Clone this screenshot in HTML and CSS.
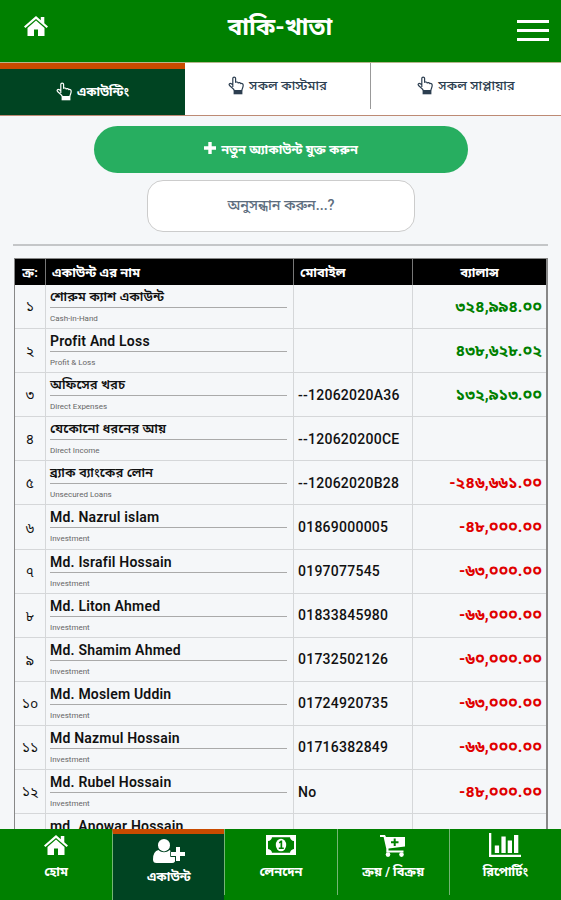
FILE: index.html
```html
<!DOCTYPE html>
<html lang="bn">
<head>
    <meta charset="UTF-8">
    <meta name="viewport" content="width=device-width, initial-scale=1.0">
    <title>বাকি-খাতা</title>
    <link rel="stylesheet" href="styles.css">
</head>
<body>
    <!-- Shared icons -->
    <svg class="sprite">
        <symbol id="home" viewBox="0 0 24 20">
            <path d="M12 0 L0 10.6 L1.4 12.1 L12 2.9 L22.6 12.1 L24 10.6 L20.3 7.3 V1 H16.8 V4.2 Z"/>
            <path d="M12 4.5 L3.5 11.9 V20 H10 V13.5 H14 V20 H20.5 V11.9 Z"/>
        </symbol>
        <symbol id="hand" viewBox="0 0 16 19">
            <path d="M4.8 11 V2.6 C4.8 .5 7.6 .5 7.6 2.6 V6.3 C8.6 5.7 9.8 6 10.2 6.9 C11.2 6.3 12.3 6.7 12.7 7.6 C14.2 7.1 15.2 8 15.2 9.3 C15.2 11.8 14 12.6 13.8 14.5 H6.3 C5.5 12.8 3.6 11.5 1.8 9.8 C.3 8.3 1.8 6.6 3.4 7.7 L4.8 8.8" fill="none" stroke="currentColor" stroke-width="1.2" stroke-linejoin="round"/>
            <path d="M5.6 14.5 H14.4 V18.3 H5.6 Z"/>
        </symbol>
    </svg>

    <header class="header">
        <svg class="header-home"><use href="#home"/></svg>
        <h1 class="title">বাকি-খাতা</h1>
        <div class="menu-btn"><span></span><span></span><span></span></div>
    </header>

    <nav class="tabs">
        <a class="tab active"><svg class="hand"><use href="#hand"/></svg><span>একাউন্টিং</span></a>
        <a class="tab"><svg class="hand"><use href="#hand"/></svg><span>সকল কাস্টমার</span></a>
        <a class="tab"><svg class="hand"><use href="#hand"/></svg><span>সকল সাপ্লায়ার</span></a>
    </nav>

    <main class="content">
        <button class="add-btn">
            <svg class="plus" viewBox="0 0 12 12"><path d="M4.3 0h3.4v4.3H12v3.4H7.7V12H4.3V7.7H0V4.3h4.3z"/></svg>
            <span>নতুন অ্যাকাউন্ট যুক্ত করুন</span>
        </button>
        <div class="search"><span>অনুসন্ধান করুন...?</span></div>
        <hr class="line">

        <div class="table">
            <div class="row head">
                <div>ক্র:</div><div>একাউন্ট এর নাম</div><div>মোবাইল</div><div>ব্যালান্স</div>
            </div>
            <div class="row">
                <div class="num">১</div>
                <div class="name"><b class="bn">শোরুম ক্যাশ একাউন্ট</b><small>Cash-in-Hand</small></div>
                <div class="mobile"></div>
                <div class="balance">৩২৪,৯৯৪.০০</div>
            </div>
            <div class="row">
                <div class="num">২</div>
                <div class="name"><b>Profit And Loss</b><small>Profit &amp; Loss</small></div>
                <div class="mobile"></div>
                <div class="balance">৪৩৮,৬২৮.০২</div>
            </div>
            <div class="row">
                <div class="num">৩</div>
                <div class="name"><b class="bn">অফিসের খরচ</b><small>Direct Expenses</small></div>
                <div class="mobile">--12062020A36</div>
                <div class="balance">১৩২,৯১৩.০০</div>
            </div>
            <div class="row">
                <div class="num">৪</div>
                <div class="name"><b class="bn">যেকোনো ধরনের আয়</b><small>Direct Income</small></div>
                <div class="mobile">--120620200CE</div>
                <div class="balance"></div>
            </div>
            <div class="row">
                <div class="num">৫</div>
                <div class="name"><b class="bn">ব্র্যাক ব্যাংকের লোন</b><small>Unsecured Loans</small></div>
                <div class="mobile">--12062020B28</div>
                <div class="balance minus">-২৪৬,৬৬১.০০</div>
            </div>
            <div class="row">
                <div class="num">৬</div>
                <div class="name"><b>Md. Nazrul islam</b><small>Investment</small></div>
                <div class="mobile">01869000005</div>
                <div class="balance minus">-৪৮,০০০.০০</div>
            </div>
            <div class="row">
                <div class="num">৭</div>
                <div class="name"><b>Md. Israfil Hossain</b><small>Investment</small></div>
                <div class="mobile">0197077545</div>
                <div class="balance minus">-৬৩,০০০.০০</div>
            </div>
            <div class="row">
                <div class="num">৮</div>
                <div class="name"><b>Md. Liton Ahmed</b><small>Investment</small></div>
                <div class="mobile">01833845980</div>
                <div class="balance minus">-৬৬,০০০.০০</div>
            </div>
            <div class="row">
                <div class="num">৯</div>
                <div class="name"><b>Md. Shamim Ahmed</b><small>Investment</small></div>
                <div class="mobile">01732502126</div>
                <div class="balance minus">-৬০,০০০.০০</div>
            </div>
            <div class="row">
                <div class="num">১০</div>
                <div class="name"><b>Md. Moslem Uddin</b><small>Investment</small></div>
                <div class="mobile">01724920735</div>
                <div class="balance minus">-৬৩,০০০.০০</div>
            </div>
            <div class="row">
                <div class="num">১১</div>
                <div class="name"><b>Md Nazmul Hossain</b><small>Investment</small></div>
                <div class="mobile">01716382849</div>
                <div class="balance minus">-৬৬,০০০.০০</div>
            </div>
            <div class="row">
                <div class="num">১২</div>
                <div class="name"><b>Md. Rubel Hossain</b><small>Investment</small></div>
                <div class="mobile">No</div>
                <div class="balance minus">-৪৮,০০০.০০</div>
            </div>
            <div class="row">
                <div class="num"></div>
                <div class="name"><b>md. Anowar Hossain</b></div>
                <div class="mobile"></div>
                <div class="balance"></div>
            </div>
        </div>
    </main>

    <footer class="bottom-nav">
        <a class="nav-item">
            <svg class="nav-icon"><use href="#home"/></svg>
            <span>হোম</span>
        </a>
        <a class="nav-item active">
            <svg class="nav-icon wide" viewBox="0 0 32 24">
                <ellipse cx="11" cy="6.2" rx="6" ry="6.2"/>
                <path d="M5.5 11 C8.5 14 13.5 14 16.5 11 L17.5 11.8 V18 H22 V22.5 Q21 24 19 24 H3.5 Q0 24 0 20.5 Q0 12 5.5 11 Z"/>
                <path class="badge" d="M23 8h4v5h5v4h-5v5h-4v-5h-5v-4h5z"/>
            </svg>
            <span>একাউন্ট</span>
        </a>
        <a class="nav-item">
            <svg class="nav-icon money" viewBox="0 0 30 20">
                <path fill-rule="evenodd" d="M0 0H30V20H0Z M6 2.2 Q5.5 5.5 2 6 V14 Q5.5 14.5 6 17.8 H24 Q24.5 14.5 28 14 V6 Q24.5 5.5 24 2.2 Z"/>
                <ellipse cx="15" cy="10" rx="5.2" ry="6.3"/>
                <path class="cut" d="M12.8 7.2 L14.8 5.6 H16.2 V12.6 H17.8 V14 H12.8 V12.6 H14.5 V7.8 L13.5 8.4 Z"/>
            </svg>
            <span>লেনদেন</span>
        </a>
        <a class="nav-item">
            <svg class="nav-icon cart" viewBox="0 0 26 22">
                <path d="M0 0H5L6 2H25V11.5L8.5 13.5V15.5H23.5V17.5H6.3V13.8L3.6 2H0Z"/>
                <circle cx="8" cy="19.6" r="2.3"/><circle cx="21.5" cy="19.6" r="2.3"/>
                <path class="cut" d="M13.7 3.5h2v2.7h2.8v2h-2.8V11h-2V8.200H11v-2h2.700z"/>
            </svg>
            <span>ক্রয় / বিক্রয়</span>
        </a>
        <a class="nav-item">
            <svg class="nav-icon chart" viewBox="0 0 32 24">
                <path d="M0 0H2.300V21.700H32V24H0Z M5.800 12.500h4.300v7.500H5.800z M12.400 3.500h4.300v16.500h-4.300z M18.700 7.500H23v12.500h-4.300z M25 2h4.300v18H25z"/>
            </svg>
            <span>রিপোর্টিং</span>
        </a>
    </footer>
</body>
</html>
```

FILE: styles.css
```css
* {
    box-sizing: border-box;
}
body {
    margin: 0;
    height: 900px;
    overflow: hidden;
    display: flex;
    flex-direction: column;
    background-color: #f5f7f9;
    color: #111;
    font-family: Roboto, "Noto Sans Bengali", sans-serif;
}
svg {
    fill: currentColor;
}
.sprite {
    display: none;
}

/* Header */
.header {
    flex: none;
    height: 62px;
    padding: 0 12px 0 24px;
    display: flex;
    justify-content: space-between;
    background-color: #008000;
    color: #fff;
}
.header-home {
    width: 24px;
    height: 20px;
    margin-top: 16px;
}
.title {
    margin: 0 5px 0 0;
    font-size: 24px;
    line-height: 54px;
    font-weight: 700;
}
.menu-btn {
    width: 32px;
    padding-top: 20px;
    display: flex;
    flex-direction: column;
    gap: 6px;
}
.menu-btn span {
    height: 3px;
    background-color: #fff;
}

/* Top tabs */
.tabs {
    flex: none;
    height: 54px;
    display: grid;
    grid-template-columns: 185px 185px 1fr;
    border-top: 1px solid #b5b58c;
    border-bottom: 1px solid #bd8a74;
    background-color: #fff;
}
.tab {
    height: 46px;
    padding-bottom: 2px;
    display: flex;
    align-items: center;
    justify-content: center;
    gap: 5px;
    font-size: 13.2px;
    font-weight: 500;
    color: #2c3e50;
}
.tab + .tab + .tab {
    border-left: 1px solid #999;
}
.tab.active {
    height: 52px;
    padding-bottom: 1px;
    border-top: 6px solid #c84b00;
    background-color: #004422;
    color: #fff;
    font-size: 12.6px;
    font-weight: 700;
}
.hand {
    width: 16px;
    height: 19px;
}
.tab span {
    padding-top: 2px;
}

/* Page content */
.content {
    flex: 1;
    min-height: 0;
    overflow: hidden;
    padding: 10px 13px 0;
    display: flex;
    flex-direction: column;
}
.add-btn {
    flex: none;
    width: 374px;
    height: 47px;
    margin-left: 81px;
    border: none;
    border-radius: 24px;
    display: flex;
    align-items: center;
    justify-content: center;
    gap: 5px;
    background-color: #27ae60;
    color: #fff;
    font: inherit;
    font-size: 12.8px;
    font-weight: 700;
}
.add-btn span {
    padding-top: 2px;
}
.plus {
    width: 12px;
    height: 12px;
    margin-bottom: 3px;
}
.search {
    flex: none;
    width: 268px;
    height: 52px;
    margin: 7px 0 0 134px;
    display: flex;
    align-items: center;
    justify-content: center;
    border: 1px solid #ccc;
    border-radius: 16px;
    background-color: #fff;
    color: #5d6d7e;
    font-size: 14.3px;
    font-weight: 500;
}
.line {
    flex: none;
    width: 535px;
    height: 2px;
    margin: 12px 0;
    border: none;
    background-color: #c4c6c8;
}

/* Accounts table */
.table {
    flex: none;
    width: 534px;
    margin-left: 1px;
    border: 1px solid #888;
    border-right-width: 2px;
}
.row {
    height: 44.1px;
    display: grid;
    grid-template-columns: 30px 248px 119px 1fr;
    border-bottom: 1px solid #d5d7d9;
}
.row > div {
    display: flex;
    align-items: center;
    padding-left: 4px;
    border-left: 1px solid #d5d7d9;
    white-space: nowrap;
}
.row > div:first-child {
    border-left: none;
    padding-left: 0;
    justify-content: center;
}
.row.head {
    height: 26px;
    padding-top: 0;
    border-bottom: none;
    background-color: #000;
    color: #fff;
    font-size: 13px;
    font-weight: 700;
}
.row.head > div {
    padding-top: 2px;
    border-color: #777;
}
.row.head > div:nth-child(2), .row.head > div:nth-child(3) {
    padding-left: 6px;
}
.head > div:last-child {
    justify-content: center;
    padding-left: 0;
}
.row > .num {
    padding-top: 4px;
    font-size: 14px;
}
.row > .name {
    flex-direction: column;
    align-items: stretch;
    justify-content: flex-start;
    padding-right: 6px;
}
.name b {
    height: 23px;
    line-height: 24px;
    font-size: 14px;
    font-weight: 600;
    letter-spacing: 0.2px;
    border-bottom: 1px solid #aaa;
}
.name .bn {
    font-size: 13px;
    letter-spacing: 0.1px;
}
.name small {
    height: 20px;
    line-height: 21px;
    font-size: 8px;
    color: #666;
}
.mobile {
    font-size: 14px;
    font-weight: 500;
    letter-spacing: 0.25px;
}
.row > .balance {
    justify-content: flex-end;
    padding: 2px 4px 0 0;
    font-size: 16px;
    font-weight: 700;
    color: #008000;
}
.row > .minus {
    color: #e00000;
}

/* Bottom navigation */
.bottom-nav {
    flex: none;
    height: 71px;
    display: grid;
    grid-template-columns: repeat(5, 1fr);
    background-color: #008000;
    color: #fff;
}
.nav-item {
    height: 66px;
    padding-top: 6px;
    display: flex;
    flex-direction: column;
    align-items: center;
    border-left: 1px solid #74b574;
    font-size: 12.8px;
    font-weight: 700;
    line-height: 20px;
}
.nav-item:first-child {
    border-left: none;
}
.nav-item.active {
    height: 71px;
    padding-top: 5px;
    border-top: 5px solid #c84b00;
    background-color: #004422;
}
.nav-icon {
    flex: none;
    width: 24px;
    height: 20px;
    margin-bottom: 7px;
}
.nav-icon.wide {
    width: 32px;
    height: 24px;
    margin-bottom: 4px;
}
.nav-icon.money {
    width: 30px;
}
.nav-icon.cart {
    width: 26px;
    height: 22px;
    margin-bottom: 5px;
}
.nav-icon.chart {
    width: 32px;
    height: 24px;
    margin: -2px 0 5px;
}
.badge {
    stroke: #004422;
    stroke-width: 1.2px;
    paint-order: stroke;
}
.cut {
    fill: #008000;
}
```
